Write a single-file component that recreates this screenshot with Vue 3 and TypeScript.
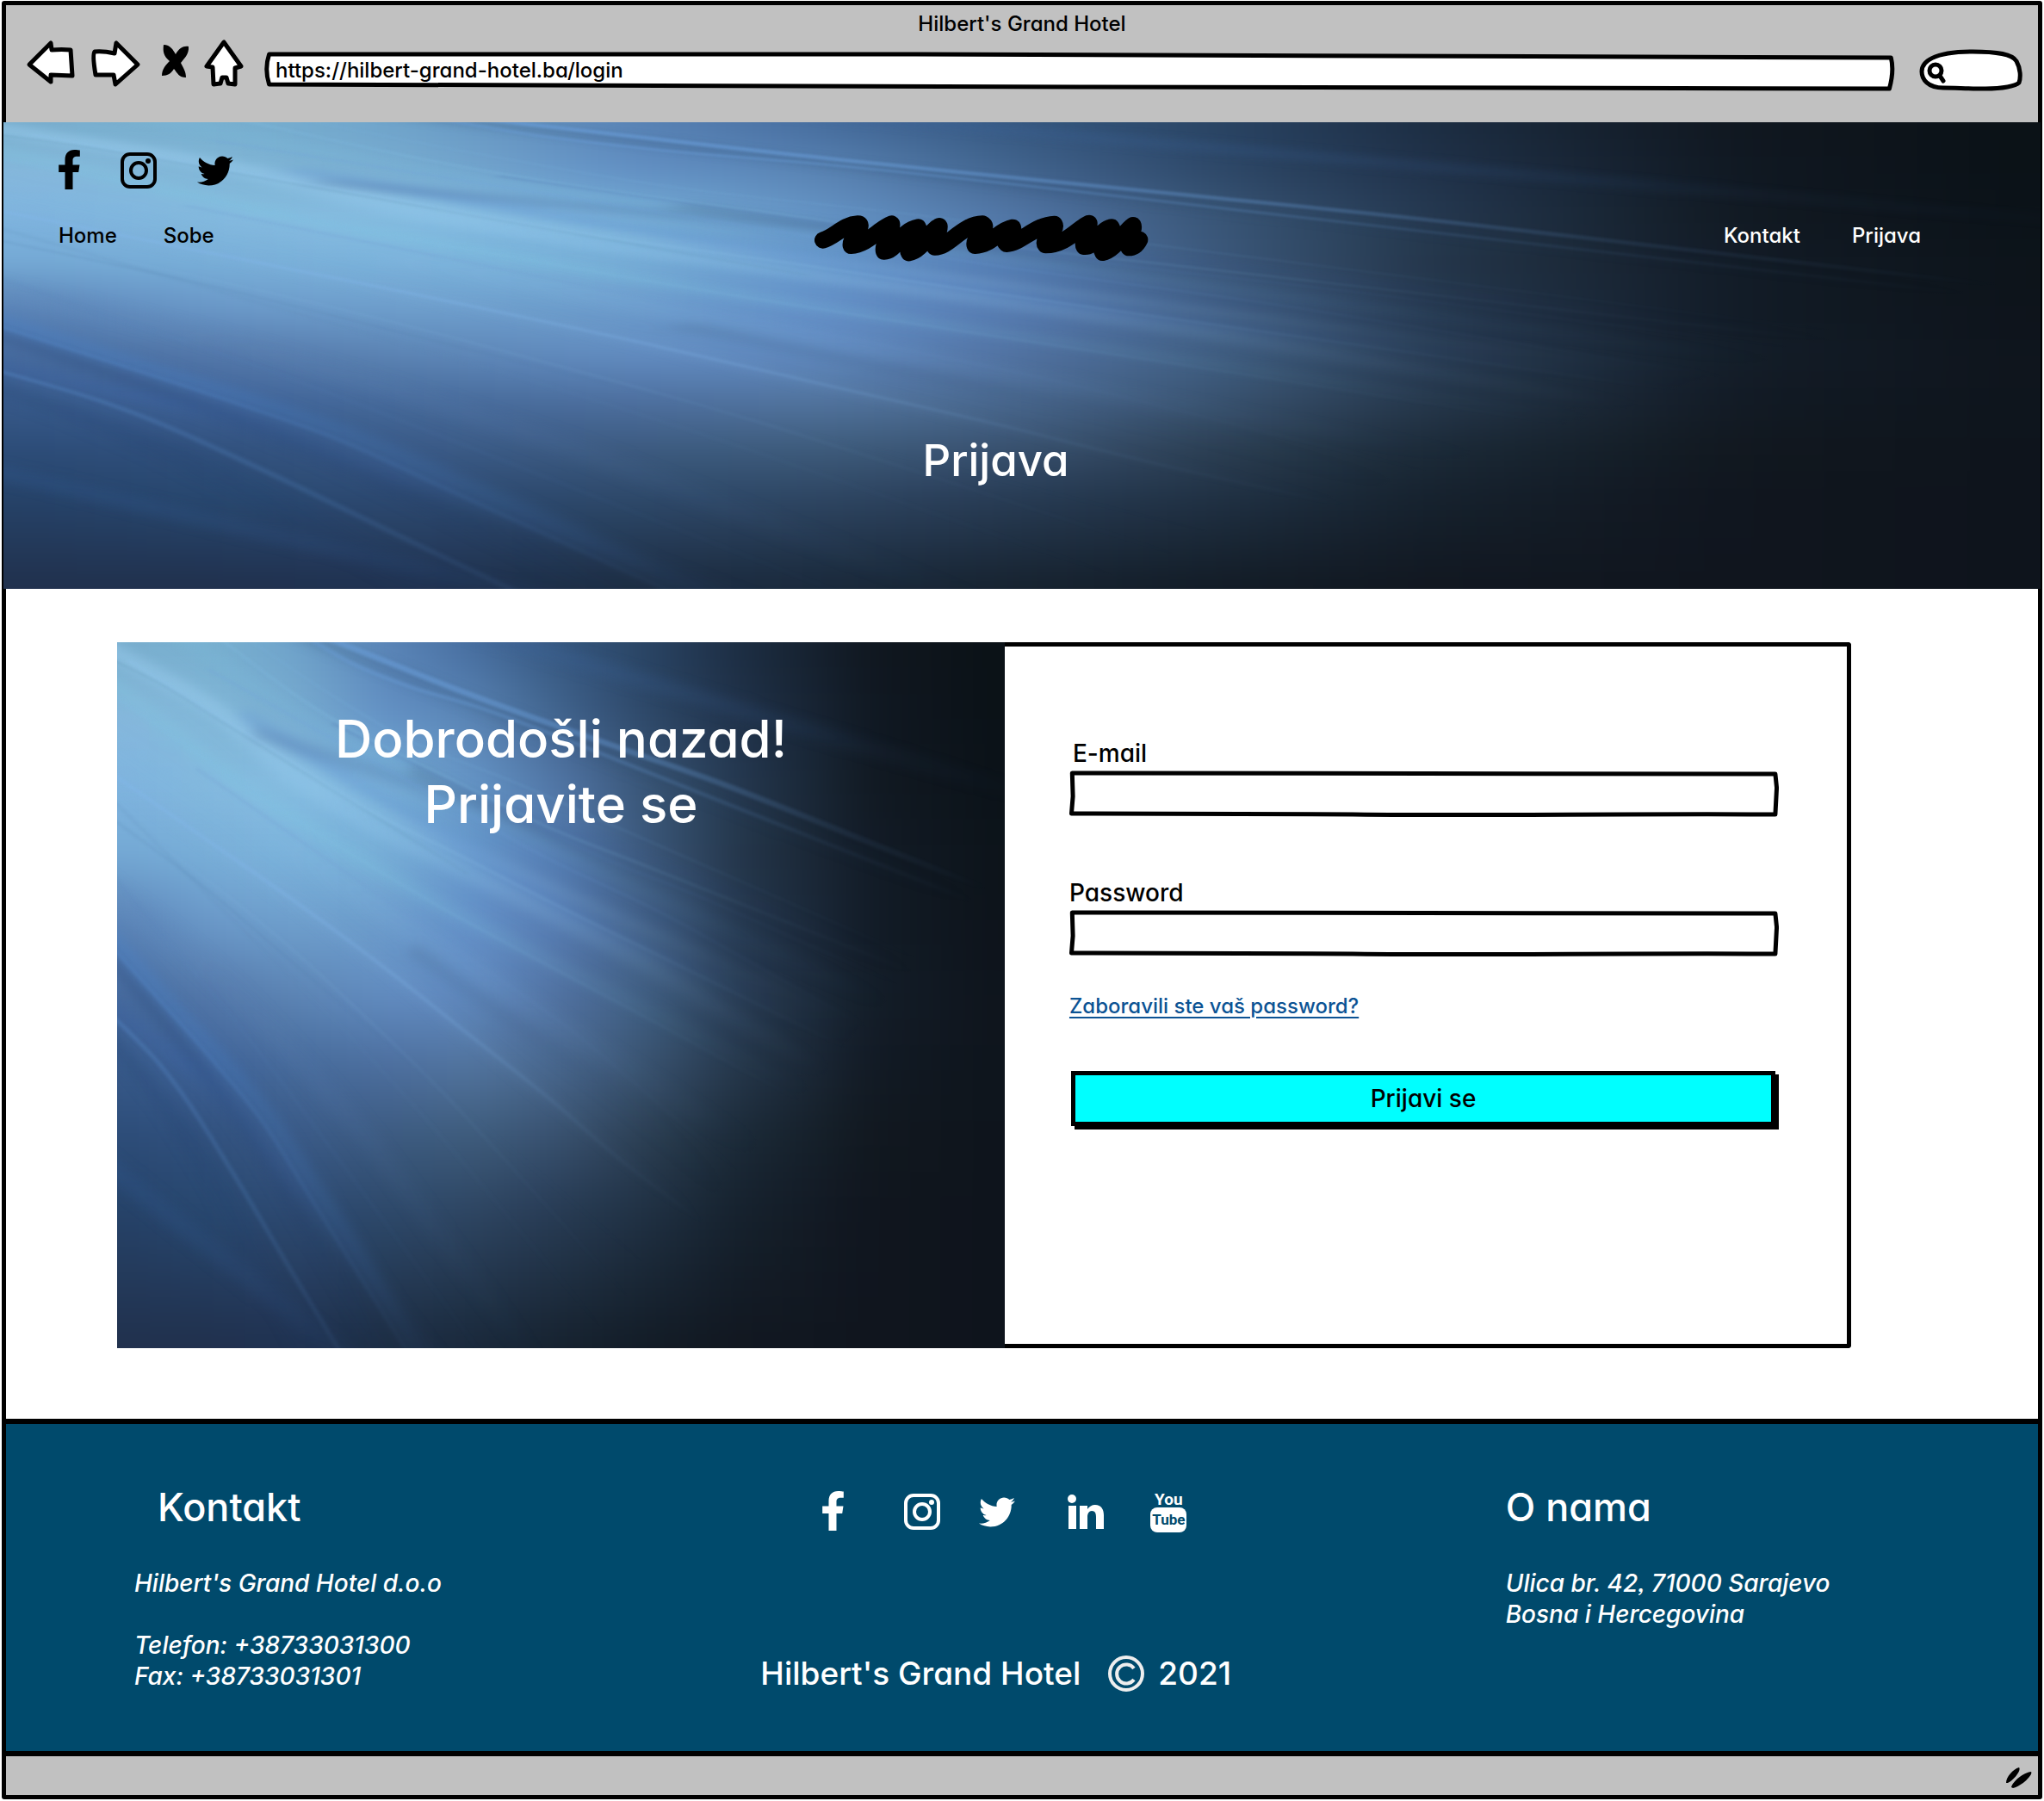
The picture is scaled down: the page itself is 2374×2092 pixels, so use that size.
<script setup lang="ts">
import { ref } from 'vue'

type Point = [number, number]

interface Ray {
  d: string
  color: string
  width: number
  opacity: number
  soft: boolean
}

const address = ref('https://hilbert-grand-hotel.ba/login')
const query = ref('')
const email = ref('')
const password = ref('')

// Colour samples of the light beam backdrop: rows from top to bottom, columns at the stops below.
const stopsX = [0, 0.1, 0.2, 0.3, 0.4, 0.5, 0.6, 0.7, 0.85, 1]
const stopsY = [0, 0.1, 0.2, 0.3, 0.4, 0.5, 0.6, 0.7, 0.8, 1]
const palette = [
  ['78accc', '78b0cf', '6ea2ca', '5a84b6', '466c9e', '34567e', '294362', '1c2d42', '10171f', '0a1116'],
  ['86b8dc', '82b8d8', '78acd0', '6290c4', '5a84b4', '40628c', '2c4666', '20324a', '101822', '0a1116'],
  ['7eb4e0', '84bade', '86bee2', '78b0d8', '6494c6', '5074a4', '385474', '243850', '111922', '0b1218'],
  ['74a8d4', '78aed8', '7cb4dc', '78b0d8', '6698cc', '547cb2', '3a5678', '24364a', '121b26', '0c1319'],
  ['5880b4', '6a98c8', '6e9ecc', '6c9ccc', '6490c8', '567cb2', '405e86', '253850', '121b26', '0d131a'],
  ['44689c', '5276a8', '5c84b4', '628cc0', '608ac0', '5070a0', '405f82', '283b54', '131d28', '0e141c'],
  ['365888', '3e6298', '466a9a', '4c6e9e', '52749e', '48678e', '38516e', '25374b', '121a24', '0e141c'],
  ['2c4c78', '30507c', '3a5a88', '3c5a80', '3e5c7c', '38506e', '2b3e52', '1b2a38', '11181f', '0e141c'],
  ['264268', '284870', '2d4a72', '2e4a6c', '2f4764', '283c55', '203144', '16222e', '10151e', '0e141c'],
  ['20304c', '20304c', '1f3150', '1c2c42', '19283a', '16222f', '121b25', '111720', '10151e', '0e141c'],
].map((row) => row.map((hex) => [0, 2, 4].map((i) => parseInt(hex.slice(i, i + 2), 16))))

function bracket(stops: number[], v: number): [number, number] {
  for (let i = 0; i < stops.length - 2; i++) {
    if (v < stops[i + 1]) return [i, (v - stops[i]) / (stops[i + 1] - stops[i])]
  }
  const last = stops.length - 2
  return [last, (v - stops[last]) / (stops[last + 1] - stops[last])]
}

function colorAt(u: number, v: number): string {
  const [i, s] = bracket(stopsX, u)
  const [j, t] = bracket(stopsY, v)
  const c = [0, 1, 2].map((k) => {
    const top = palette[j][i][k] * (1 - s) + palette[j][i + 1][k] * s
    const bottom = palette[j + 1][i][k] * (1 - s) + palette[j + 1][i + 1][k] * s
    return Math.round(top * (1 - t) + bottom * t)
  })
  return `rgb(${c.join(',')})`
}

const cellCount = 28
const cells: { x: number; y: number; fill: string }[] = []
for (let row = -3; row < cellCount + 3; row++) {
  for (let col = -3; col < cellCount + 3; col++) {
    const u = Math.min(1, Math.max(0, (col + 0.5) / cellCount))
    const v = Math.min(1, Math.max(0, (row + 0.5) / cellCount))
    cells.push({ x: col * 56, y: row * 56, fill: colorAt(u, v) })
  }
}

// Continues the line a -> b beyond b, so that no ray stops inside the picture.
function beyond(a: Point, b: Point, factor: number): Point {
  return [b[0] + (b[0] - a[0]) * factor, b[1] + (b[1] - a[1]) * factor]
}

// Catmull-Rom spline through the given points.
function curve(inner: Point[]): string {
  const n = inner.length
  const points = [beyond(inner[1], inner[0], 2), ...inner, beyond(inner[n - 2], inner[n - 1], 5)]
  let d = `M${points[0].join(' ')}`
  for (let i = 0; i < points.length - 1; i++) {
    const p0 = points[Math.max(0, i - 1)]
    const p1 = points[i]
    const p2 = points[i + 1]
    const p3 = points[Math.min(points.length - 1, i + 2)]
    if (i === 0 || i === points.length - 2) {
      d += ` L${p2.join(' ')}`
      continue
    }
    const first = i === 1 ? p1 : p0
    const last = i === points.length - 3 ? p2 : p3
    const a = [p1[0] + (p2[0] - first[0]) / 6, p1[1] + (p2[1] - first[1]) / 6]
    const b = [p2[0] - (last[0] - p1[0]) / 6, p2[1] - (last[1] - p1[1]) / 6]
    d += ` C${a.join(' ')} ${b.join(' ')} ${p2.join(' ')}`
  }
  return d
}

function ray(points: Point[], color: string, width: number, opacity: number, soft = false): Ray {
  return { d: curve(points), color, width, opacity, soft }
}

const rays: Ray[] = [
  ray([[0, 30], [160, 140], [300, 290], [440, 400], [600, 500], [760, 600], [940, 720], [1100, 840]], '#98ccf0', 34, 0.34, true),
  ray([[0, 20], [90, 85], [190, 160], [300, 260], [420, 350], [580, 440]], '#a0d0f0', 20, 0.3, true),
  ray([[130, 0], [260, 110], [420, 230], [600, 350], [800, 470]], '#7cbcdc', 30, 0.22, true),
  ray([[80, 180], [220, 320], [350, 420], [480, 520], [640, 630], [860, 770]], '#84cce4', 26, 0.26, true),
  ray([[0, 180], [180, 330], [340, 480], [520, 640], [720, 800]], '#86b8e4', 50, 0.14, true),
  ray([[540, 400], [700, 520], [860, 640], [1040, 740]], '#5c8cd0', 24, 0.3, true),
  ray([[0, 300], [160, 440], [330, 590], [480, 730], [620, 870], [760, 1010]], '#84b0e0', 18, 0.22, true),
  ray([[0, 670], [100, 810], [180, 920], [260, 1040], [340, 1190], [420, 1340], [520, 1560]], '#4c88d0', 22, 0.4, true),
  ray([[0, 820], [90, 910], [170, 980], [260, 1120]], '#3c66a8', 30, 0.28, true),
  ray([[0, 1180], [90, 1270], [200, 1380]], '#33619c', 40, 0.25, true),
  ray([[0, 560], [140, 700], [300, 900], [440, 1100], [560, 1300]], '#5c84b4', 40, 0.16, true),
  ray([[0, 720], [120, 900], [230, 1090], [330, 1290], [430, 1500]], '#1c3866', 18, 0.32, true),
  ray([[0, 900], [90, 1040], [190, 1240], [290, 1480]], '#1e3c68', 30, 0.2, true),
  ray([[700, 0], [860, 60], [1020, 120], [1180, 180]], '#3c6298', 34, 0.3, true),
  ray([[600, 120], [780, 210], [960, 300], [1200, 420]], '#24405f', 26, 0.2, true),
  ray([[640, 360], [840, 440], [1000, 510], [1200, 620]], '#35548a', 24, 0.22, true),
  ray([[840, 480], [1000, 580], [1160, 680], [1300, 770]], '#26405a', 22, 0.25, true),
  ray([[760, 900], [880, 1010], [1010, 1150], [1120, 1290]], '#2c4664', 30, 0.2, true),
  ray([[390, 0], [480, 45], [600, 105], [730, 165], [900, 240], [1080, 320], [1300, 430]], '#6ca0dc', 12, 0.55),
  ray([[350, 0], [420, 50], [520, 100], [640, 145], [780, 210], [980, 310]], '#6ca0dc', 8, 0.4),
  ray([[190, 0], [330, 130], [450, 220], [600, 310], [760, 410], [900, 480]], '#84c0e4', 5, 0.3),
  ray([[240, 0], [370, 110], [520, 220], [700, 310], [900, 420]], '#7cb4e0', 4, 0.25),
  ray([[0, 44], [80, 95], [170, 165]], '#5c90b0', 3, 0.35),
  ray([[300, 260], [440, 370], [600, 470], [770, 580], [980, 710]], '#90c4ec', 6, 0.3),
  ray([[100, 210], [250, 340], [400, 460], [560, 580], [720, 690], [900, 810], [1150, 980]], '#80bce0', 5, 0.3),
  ray([[0, 300], [160, 440], [330, 590], [480, 730], [620, 870], [760, 1010], [900, 1160], [1100, 1350]], '#84b8ec', 6, 0.42),
  ray([[0, 385], [130, 500], [280, 650], [420, 810], [560, 980], [700, 1170], [900, 1450]], '#80b0dc', 4, 0.26),
  ray([[0, 400], [150, 540], [300, 700], [430, 840]], '#44709c', 3, 0.2),
  ray([[460, 560], [620, 700], [800, 860], [980, 1050]], '#7098cc', 6, 0.2),
  ray([[560, 340], [760, 480], [960, 600], [1160, 740]], '#70a0dc', 5, 0.25),
  ray([[700, 380], [860, 480], [1020, 560], [1200, 660]], '#5078b0', 5, 0.3),
  ray([[0, 690], [100, 830], [180, 945], [260, 1070], [340, 1230], [430, 1410]], '#5c94dc', 5, 0.3),
  ray([[0, 840], [70, 930], [130, 1030], [210, 1190], [300, 1380], [390, 1568]], '#5c90d0', 7, 0.36),
  ray([[100, 680], [220, 860], [340, 1060], [480, 1300]], '#5484b8', 5, 0.16),
  ray([[240, 660], [400, 860], [560, 1080], [720, 1320]], '#6088b4', 6, 0.16),
]

const footerIcons = [
  { name: 'Facebook', icon: 'facebook', width: 25 },
  { name: 'Instagram', icon: 'instagram', width: 42 },
  { name: 'Twitter', icon: 'twitter', width: 42 },
  { name: 'LinkedIn', icon: 'linkedin', width: 42 },
]
const headerIcons = footerIcons.slice(0, 3)
</script>

<template>
  <div class="window">
    <svg class="defs" aria-hidden="true">
      <defs>
        <filter id="mesh-blur" x="-20%" y="-20%" width="140%" height="140%" color-interpolation-filters="sRGB">
          <feGaussianBlur stdDeviation="32" />
        </filter>
        <filter id="ray-soft" filterUnits="userSpaceOnUse" x="-100" y="-100" width="1800" height="1800" color-interpolation-filters="sRGB">
          <feGaussianBlur stdDeviation="12" />
        </filter>
        <filter id="ray-fine" filterUnits="userSpaceOnUse" x="-100" y="-100" width="1800" height="1800" color-interpolation-filters="sRGB">
          <feGaussianBlur stdDeviation="3" />
        </filter>
        <linearGradient id="ray-fade" gradientUnits="userSpaceOnUse" x1="400" y1="300" x2="1300" y2="900">
          <stop offset="0" stop-color="#fff" />
          <stop offset="0.4" stop-color="#999" />
          <stop offset="0.7" stop-color="#333" />
          <stop offset="1" stop-color="#000" />
        </linearGradient>
        <mask id="ray-mask" maskUnits="userSpaceOnUse" x="-100" y="-100" width="1800" height="1800">
          <rect x="-100" y="-100" width="1800" height="1800" fill="url(#ray-fade)" />
        </mask>
      </defs>
      <symbol id="beams" viewBox="0 0 1568 1568" preserveAspectRatio="none">
        <g filter="url(#mesh-blur)">
          <rect v-for="(cell, i) in cells" :key="i" :x="cell.x" :y="cell.y" width="58" height="58" :fill="cell.fill" />
        </g>
        <g mask="url(#ray-mask)">
          <g filter="url(#ray-soft)" fill="none">
            <path v-for="(r, i) in rays.filter((x) => x.soft)" :key="i" :d="r.d" :stroke="r.color" :stroke-width="r.width" :opacity="r.opacity" />
          </g>
          <g filter="url(#ray-fine)" fill="none">
            <path v-for="(r, i) in rays.filter((x) => !x.soft)" :key="i" :d="r.d" :stroke="r.color" :stroke-width="r.width" :opacity="r.opacity" />
          </g>
        </g>
      </symbol>
      <symbol id="facebook" viewBox="22 0 276 512">
        <path d="M279.14 288l14.22-92.66h-88.91v-60.13c0-25.35 12.42-50.06 52.24-50.06h40.42V6.26S260.43 0 225.36 0c-73.22 0-121.08 44.38-121.08 124.72v70.62H22.89V288h81.39v224h100.17V288z" />
      </symbol>
      <symbol id="instagram" viewBox="0 0 42 46">
        <rect x="2" y="5" width="38" height="38" rx="9" fill="none" stroke="currentColor" stroke-width="4" />
        <circle cx="21" cy="24" r="9" fill="none" stroke="currentColor" stroke-width="4" />
        <circle cx="32" cy="13" r="3" />
      </symbol>
      <symbol id="twitter" viewBox="0 -42 512 561">
        <path d="M459.37 151.716c.325 4.548.325 9.097.325 13.645 0 138.72-105.583 298.558-298.558 298.558-59.452 0-114.68-17.219-161.137-47.106 8.447.974 16.568 1.299 25.34 1.299 49.055 0 94.213-16.568 130.274-44.832-46.132-.975-84.792-31.188-98.112-72.772 6.498.974 12.995 1.624 19.818 1.624 9.421 0 18.843-1.3 27.614-3.573-48.081-9.747-84.143-51.98-84.143-102.985v-1.299c13.969 7.797 30.214 12.67 47.431 13.319-28.264-18.843-46.781-51.005-46.781-87.391 0-19.492 5.197-37.36 14.294-52.954 51.655 63.675 129.3 105.258 216.365 109.807-1.624-7.797-2.599-15.918-2.599-24.04 0-57.828 46.782-104.934 104.934-104.934 30.213 0 57.502 12.67 76.67 33.137 23.715-4.548 46.456-13.32 66.599-25.34-7.798 24.366-24.366 44.833-46.132 57.827 21.117-2.273 41.584-8.122 60.426-16.243-14.292 20.791-32.161 39.308-52.628 54.253z" />
      </symbol>
      <symbol id="linkedin" viewBox="0 0 42 46">
        <circle cx="5" cy="9" r="5" />
        <rect x="1" y="17" width="9" height="27" />
        <path d="M14 17h9v4c2-3 5-5 9-5 7 0 10 5 10 12v16h-9V30c0-4-1-7-5-7-3 0-5 3-5 7v14h-9z" />
      </symbol>
      <symbol id="field-frame" viewBox="0 0 100 54" preserveAspectRatio="none">
        <path class="stroke" d="M.4 3 C30 2 60 2 99.5 4 L99.7 20 L99.5 51 C75 50 60 53 40 51 L.3 50 L.5 30 Z" />
      </symbol>
    </svg>

    <header class="chrome">
      <div class="chrome-title">Hilbert's Grand Hotel</div>
      <div class="toolbar">
        <button class="tool" type="button" aria-label="Back">
          <svg width="60" height="60" viewBox="29 46 60 60">
            <path class="sketch" d="M34 75 L59 50 L60 58 Q72 57 82 58 L84 88 L59 87 L59 95 Z" />
          </svg>
        </button>
        <button class="tool" type="button" aria-label="Forward">
          <svg width="62" height="60" viewBox="103 46 62 60">
            <path class="sketch" d="M160 75 L135 50 L133 62 Q120 59 110 60 Q107 63 111 87 L132 87 L134 98 Z" />
          </svg>
        </button>
        <button class="tool" type="button" aria-label="Stop">
          <svg width="42" height="60" viewBox="179 46 42 60">
            <path d="M190 52 C198 52 201 58 204 63 C208 56 213 53 219 54 C220 63 213 69 210 73 C213 79 216 83 216 90 C208 90 206 85 202 80 C199 85 195 88 188 88 C188 80 193 75 197 71 C190 65 189 60 190 52Z" />
          </svg>
        </button>
        <button class="tool" type="button" aria-label="Home">
          <svg width="56" height="60" viewBox="235 46 56 60">
            <path class="sketch" d="M260 49 L240 77 L247 78 L248 98 L256 97 L258 90 L263 90 L265 97 L273 98 L273 79 L280 77 Z" />
          </svg>
        </button>
        <div class="address">
          <svg class="frame" viewBox="0 0 1000 46" preserveAspectRatio="none" aria-hidden="true">
            <path class="stroke" d="M4 3 L400 3 L997 7 Q999 22 996 43 L500 41 L4 38 Q1 20 4 3Z" />
          </svg>
          <input v-model="address" type="text" aria-label="Address" spellcheck="false" />
        </div>
        <div class="search">
          <svg class="frame" viewBox="2227 52 124 54" preserveAspectRatio="none" aria-hidden="true">
            <path class="stroke" d="M2256 102 C2238 102 2231 92 2231 83 C2231 72 2244 60 2290 60 C2320 60 2336 63 2341 71 C2346 80 2346 90 2344 96 C2340 100 2325 103 2305 103 C2285 103 2270 102 2256 102Z" />
            <circle cx="2247" cy="82" r="7" class="stroke" />
            <path class="stroke" d="M2252 88 L2256 94" />
          </svg>
          <input v-model="query" type="search" aria-label="Search" />
        </div>
      </div>
    </header>

    <section class="hero">
      <svg class="beams" aria-hidden="true"><use href="#beams" width="100%" height="100%" /></svg>
      <div class="hero-social">
        <a v-for="item in headerIcons" :key="item.icon" href="#" :aria-label="item.name">
          <svg :width="item.width" height="46"><use :href="`#${item.icon}`" width="100%" height="100%" /></svg>
        </a>
      </div>
      <nav class="hero-nav">
        <div class="links">
          <a href="#">Home</a>
          <a href="#">Sobe</a>
        </div>
        <svg class="scribble" viewBox="132 738 1176 174" aria-hidden="true">
          <path d="M170 834 C215 820 240 780 292 777 C322 777 262 830 268 853 C325 850 370 790 410 777 C415 800 375 850 383 873 C425 875 440 800 502 789 C515 810 455 850 470 878 C520 870 540 800 576 785 C580 810 545 840 560 858 C610 860 650 780 727 777 C755 790 690 825 700 853 C760 850 780 800 832 790 C840 810 790 830 810 847 C860 845 910 780 977 778 C990 800 930 830 946 851 C1020 850 1060 790 1098 775 C1100 800 1070 840 1080 856 C1120 860 1130 800 1176 789 C1190 810 1130 850 1145 877 C1190 870 1220 800 1251 782 C1260 800 1220 840 1236 860 Q1260 860 1274 832" />
        </svg>
        <div class="links light">
          <a href="#">Kontakt</a>
          <a href="#">Prijava</a>
        </div>
      </nav>
      <h1>Prijava</h1>
    </section>

    <main>
      <div class="card">
        <div class="welcome">
          <svg class="beams" aria-hidden="true"><use href="#beams" width="100%" height="100%" /></svg>
          <h2>Dobrodošli nazad!<br />Prijavite se</h2>
        </div>
        <form class="login" @submit.prevent>
          <label for="email" class="email-label">E-mail</label>
          <div class="field">
            <svg class="frame" aria-hidden="true"><use href="#field-frame" width="100%" height="100%" /></svg>
            <input id="email" v-model="email" type="email" />
          </div>
          <label for="password">Password</label>
          <div class="field">
            <svg class="frame" aria-hidden="true"><use href="#field-frame" width="100%" height="100%" /></svg>
            <input id="password" v-model="password" type="password" />
          </div>
          <a class="forgot" href="#">Zaboravili ste vaš password?</a>
          <button class="submit" type="submit">Prijavi se</button>
        </form>
      </div>
    </main>

    <footer>
      <section>
        <h3 class="indent">Kontakt</h3>
        <address>
          Hilbert's Grand Hotel d.o.o<br /><br />
          Telefon: +38733031300<br />
          Fax: +38733031301
        </address>
      </section>
      <section class="middle">
        <div class="footer-social">
          <a v-for="item in footerIcons" :key="item.icon" href="#" :aria-label="item.name">
            <svg :width="item.width" height="46"><use :href="`#${item.icon}`" width="100%" height="100%" /></svg>
          </a>
          <a href="#" class="youtube" aria-label="YouTube">
            <span>You</span>
            <span class="tube">Tube</span>
          </a>
        </div>
        <p class="rights">
          <span>Hilbert's Grand Hotel</span>
          <svg width="42" height="42" viewBox="0 0 42 42" role="img" aria-label="Copyright">
            <circle cx="21" cy="21" r="19" />
            <path d="M30 15 A11 11 0 1 0 30 28" />
          </svg>
          <span>2021</span>
        </p>
      </section>
      <section>
        <h3>O nama</h3>
        <address>
          Ulica br. 42, 71000 Sarajevo<br />
          Bosna i Hercegovina
        </address>
      </section>
    </footer>

    <div class="status">
      <svg width="34" height="30" viewBox="2331 2050 34 30" aria-hidden="true">
        <path d="M2332 2073 C2332 2066 2340 2057 2347 2055 C2350 2058 2341 2070 2334 2073Z M2338 2078 C2340 2071 2352 2061 2361 2060 C2364 2063 2350 2077 2340 2079Z" />
      </svg>
    </div>
  </div>
</template>

<style>
body {
  margin: 0;
  background: #fff;
}
</style>

<style scoped>
.window {
  margin: 1px 2px 2px;
  border: 5px solid #000;
  border-radius: 3px;
  color: #000;
  font-family: Inter, 'Open Sans', sans-serif;
  font-size: 24px;
  font-weight: 500;
  font-feature-settings: 'cv11', 'ss03';
  line-height: 36px;
}

a {
  color: inherit;
  text-decoration: none;
}

svg {
  display: block;
  fill: currentColor;
}

input,
button {
  border: 0;
  background: none;
  padding: 0;
  font: inherit;
  font-feature-settings: inherit;
  color: inherit;
}

.defs {
  position: absolute;
  width: 0;
  height: 0;
}

.frame,
.beams {
  position: absolute;
  inset: 0;
  width: 100%;
  height: 100%;
}

.stroke,
.sketch {
  fill: #fff;
  stroke: #000;
  stroke-width: 5px;
  stroke-linejoin: round;
  stroke-linecap: round;
  vector-effect: non-scaling-stroke;
}

.chrome {
  height: 136px;
  background: #c1c1c1;
}

.chrome-title {
  height: 40px;
  line-height: 43px;
  text-align: center;
}

.toolbar {
  display: flex;
  align-items: flex-end;
  gap: 14px;
  padding: 0 15px 0 22px;
}

.address {
  position: relative;
  flex: 1;
  height: 46px;
}

.address input {
  position: relative;
  box-sizing: border-box;
  width: 100%;
  height: 42px;
  padding: 0 15px;
}

.search {
  position: relative;
  width: 124px;
  height: 54px;
  margin-left: 12px;
}

.search input {
  position: relative;
  width: 70px;
  height: 42px;
  margin-left: 34px;
  appearance: none;
}

.hero {
  position: relative;
  box-sizing: border-box;
  min-height: 542px;
  margin: 0 -3px;
  padding: 32px 139px 0 64px;
}

.hero > :not(.beams) {
  position: relative;
}

.hero-social {
  display: flex;
  gap: 47px;
}

.hero-nav {
  display: grid;
  grid-template-columns: 875fr 392px 896fr;
  align-items: center;
  height: 60px;
  margin-top: 24px;
}

.links {
  display: flex;
  gap: 54px;
}

.links.light {
  justify-content: flex-end;
  gap: 60px;
  color: #fff;
}

.scribble {
  width: 100%;
  margin-top: 4px;
}

.scribble path {
  fill: none;
  stroke: #000;
  stroke-width: 58px;
  stroke-linecap: round;
  stroke-linejoin: round;
}

h1,
h2,
h3 {
  margin: 0;
  font-weight: 500;
  color: #fff;
}

h1 {
  margin-top: 201px;
  padding-left: 14px;
  font-size: 51px;
  line-height: 60px;
  text-align: center;
}

main {
  padding: 62px 217px 82px 129px;
}

.card {
  display: grid;
  grid-template-columns: 1032fr 984fr;
  min-height: 820px;
}

.welcome {
  position: relative;
  padding-top: 74px;
}

h2 {
  position: relative;
  font-size: 60px;
  line-height: 76px;
  text-align: center;
}

.login {
  display: flex;
  flex-direction: column;
  border: 5px solid #000;
  border-left: 0;
  border-radius: 0 4px 4px 0;
  padding: 104px 79px 0 75px;
}

label {
  font-size: 28px;
  line-height: 40px;
}

.email-label {
  padding-left: 4px;
}

.field {
  position: relative;
  height: 54px;
  margin-bottom: 68px;
}

.field input {
  position: relative;
  box-sizing: border-box;
  width: 100%;
  height: 54px;
  padding: 0 14px;
}

.forgot {
  align-self: flex-start;
  margin-top: -28px;
  color: #0c5394;
  text-decoration: underline;
  text-decoration-thickness: 2px;
  text-underline-offset: 4px;
}

.submit {
  height: 64px;
  margin: 57px 4px 0 2px;
  border: 5px solid #000;
  background: #0ff;
  box-shadow: 4px 4px 0 #000;
  font-size: 28px;
}

footer {
  display: grid;
  grid-template-columns: 727fr 865fr 618fr;
  box-sizing: border-box;
  min-height: 392px;
  margin: 0 -5px;
  border: 6px solid #000;
  border-width: 6px 5px;
  padding: 73px 0 0 149px;
  background: #004a6c;
  color: #fff;
}

h3 {
  font-size: 45px;
  line-height: 48px;
}

.indent {
  padding-left: 27px;
}

address {
  margin-top: 46px;
  font-size: 28px;
  line-height: 36px;
}

.footer-social {
  display: grid;
  grid-template-columns: 95px 87px 103px 96px 42px;
  margin: 5px 0 0 72px;
}

.youtube {
  display: flex;
  flex-direction: column;
  align-items: center;
  font-family: 'Liberation Sans Narrow', Roboto, sans-serif;
  font-size: 19px;
  font-weight: 700;
  line-height: 19px;
}

.tube {
  width: 42px;
  border-radius: 8px;
  background: #fff;
  color: #004a6c;
  font-size: 17px;
  text-align: center;
  line-height: 29px;
}

.rights {
  display: flex;
  align-items: center;
  margin: 140px 0 0;
  font-size: 37px;
  line-height: 48px;
}

.rights svg {
  margin: 0 16px 0 32px;
  fill: none;
  stroke: #eee;
  stroke-width: 4px;
}

.status {
  display: flex;
  justify-content: flex-end;
  align-items: center;
  height: 45px;
  padding-right: 4px;
  background: #c1c1c1;
}
</style>
